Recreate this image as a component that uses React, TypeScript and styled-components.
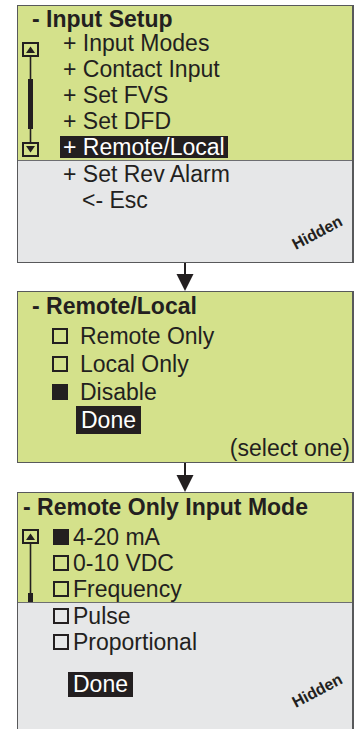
import React from 'react';
import styled, { createGlobalStyle } from 'styled-components';

const INK = '#231f20';

const GlobalStyle = createGlobalStyle`
  html, body { margin: 0; padding: 0; background: #ffffff; }
  body {
    font-family: 'Liberation Sans', Arial, Helvetica, sans-serif;
    color: ${INK};
  }
  * { box-sizing: border-box; }
`;

const Page = styled.div`
  display: flex;
  flex-direction: column;
  width: 354px;
  padding: 5px 0 0 17px;
`;

const Panel = styled.section`
  display: flex;
  flex-direction: column;
  width: 337px;
  border: 1px solid #58595b;
  border-right-width: 2px;
`;

const Green = styled.div`
  display: flex;
  flex-direction: column;
  background: #d4e18b;
`;

const Gray = styled.div<{ $h: number }>`
  position: relative;
  display: flex;
  flex-direction: column;
  height: ${(p) => p.$h}px;
  background: #e6e7e8;
  border-top: 1px solid #6d6e71;
`;

const Title = styled.div<{ $h: number; $lh: number; $pl: number }>`
  height: ${(p) => p.$h}px;
  line-height: ${(p) => p.$lh}px;
  padding-left: ${(p) => p.$pl}px;
  font-size: 23px;
  font-weight: 700;
  white-space: nowrap;
`;

const Body = styled.div`
  display: flex;
`;

const ScrollCol = styled.div<{ $w: number; $top: number }>`
  flex: 0 0 ${(p) => p.$w}px;
  padding: ${(p) => p.$top}px 0 0 4px;
  display: flex;
  align-items: flex-start;
`;

const List = styled.div`
  display: flex;
  flex-direction: column;
  flex: 1;
`;

const Row = styled.div<{ $h: number; $indent?: number; $end?: boolean }>`
  height: ${(p) => p.$h}px;
  display: flex;
  align-items: center;
  justify-content: ${(p) => (p.$end ? 'flex-end' : 'flex-start')};
  padding-left: ${(p) => p.$indent ?? 0}px;
  padding-right: ${(p) => (p.$end ? 2 : 0)}px;
  font-size: 23px;
  white-space: nowrap;
`;

const Label = styled.span<{ $selected?: boolean }>`
  padding: 0 3px;
  line-height: 22px;
  background: ${(p) => (p.$selected ? INK : 'transparent')};
  color: ${(p) => (p.$selected ? '#ffffff' : INK)};
`;

const Box = styled.span<{ $checked?: boolean; $gap: number }>`
  flex: 0 0 16px;
  width: 16px;
  height: 16px;
  margin-right: ${(p) => p.$gap}px;
  border: 2px solid ${INK};
  background: ${(p) => (p.$checked ? INK : 'transparent')};
`;

const DoneButton = styled.div<{ $h: number; $indent: number; $top?: number }>`
  align-self: flex-start;
  margin: ${(p) => p.$top ?? 0}px 0 0 ${(p) => p.$indent}px;
  padding: 0 5px;
  height: ${(p) => p.$h}px;
  line-height: ${(p) => p.$h}px;
  font-size: 23px;
  background: ${INK};
  color: #ffffff;
`;

const Hidden = styled.span<{ $top: number }>`
  position: absolute;
  left: 272px;
  top: ${(p) => p.$top}px;
  font-size: 16px;
  font-weight: 700;
  line-height: 17px;
  transform: rotate(-28deg);
  transform-origin: center;
`;

const Connector = styled.div<{ $h: number }>`
  height: ${(p) => p.$h}px;
  padding-left: 159px;
  display: flex;
`;

function ScrollGauge({ h, barTop, barBottom, down }: { h: number; barTop: number; barBottom: number; down?: boolean }) {
  return (
    <svg width={18} height={h} viewBox={`0 0 18 ${h}`}>
      <rect x={1} y={1} width={15} height={13} fill="none" stroke={INK} strokeWidth={2} />
      <polygon points="4,11 13,11 8.5,4.5" fill={INK} />
      <line x1={8.5} y1={14} x2={8.5} y2={down ? h - 14 : h} stroke={INK} strokeWidth={1.6} />
      <rect x={6} y={barTop} width={5} height={barBottom - barTop} fill={INK} />
      {down && (
        <>
          <rect x={1} y={h - 14} width={15} height={13} fill="none" stroke={INK} strokeWidth={2} />
          <polygon points={`4,${h - 11} 13,${h - 11} 8.5,${h - 4.5}`} fill={INK} />
        </>
      )}
    </svg>
  );
}

function Arrow({ h }: { h: number }) {
  return (
    <Connector $h={h}>
      <svg width={18} height={h} viewBox={`0 0 18 ${h}`}>
        <line x1={9} y1={0} x2={9} y2={h - 14} stroke={INK} strokeWidth={2} />
        <polygon points={`0.5,${h - 17} 17.5,${h - 17} 9,${h}`} fill={INK} />
      </svg>
    </Connector>
  );
}

const setupItems = ['+ Input Modes', '+ Contact Input', '+ Set FVS', '+ Set DFD'];

export default function App() {
  return (
    <>
      <GlobalStyle />
      <Page>
        <Panel>
          <Green>
            <Title $h={24} $lh={26} $pl={14}>- Input Setup</Title>
            <Body>
              <ScrollCol $w={42} $top={12}>
                <ScrollGauge h={115} barTop={37} barBottom={87} down />
              </ScrollCol>
              <List>
                {setupItems.map((t) => (
                  <Row key={t} $h={26}>
                    <Label>{t}</Label>
                  </Row>
                ))}
                <Row $h={26}>
                  <Label $selected>+ Remote/Local</Label>
                </Row>
              </List>
            </Body>
          </Green>
          <Gray $h={102}>
            <Row $h={26} $indent={42}>
              <Label>+ Set Rev Alarm</Label>
            </Row>
            <Row $h={26} $indent={61}>
              <Label>&lt;- Esc</Label>
            </Row>
            <Hidden $top={63}>Hidden</Hidden>
          </Gray>
        </Panel>

        <Arrow h={28} />

        <Panel>
          <Green>
            <Title $h={30} $lh={28} $pl={14}>- Remote/Local</Title>
            <Row $h={28} $indent={34}>
              <Box $gap={12} />
              Remote Only
            </Row>
            <Row $h={28} $indent={34}>
              <Box $gap={12} />
              Local Only
            </Row>
            <Row $h={28} $indent={34}>
              <Box $checked $gap={12} />
              Disable
            </Row>
            <Row $h={28}>
              <DoneButton $h={28} $indent={58}>Done</DoneButton>
            </Row>
            <Row $h={28} $end>(select one)</Row>
          </Green>
        </Panel>

        <Arrow h={29} />

        <Panel>
          <Green>
            <Title $h={31} $lh={28} $pl={5}>- Remote Only Input Mode</Title>
            <Body>
              <ScrollCol $w={35} $top={5}>
                <ScrollGauge h={73} barTop={64} barBottom={73} />
              </ScrollCol>
              <List>
                <Row $h={26}>
                  <Box $checked $gap={4} />
                  4-20 mA
                </Row>
                <Row $h={26}>
                  <Box $gap={4} />
                  0-10 VDC
                </Row>
                <Row $h={26}>
                  <Box $gap={4} />
                  Frequency
                </Row>
              </List>
            </Body>
          </Green>
          <Gray $h={150}>
            <Row $h={26} $indent={35}>
              <Box $gap={4} />
              Pulse
            </Row>
            <Row $h={26} $indent={35}>
              <Box $gap={4} />
              Proportional
            </Row>
            <DoneButton $h={25} $indent={50} $top={17}>Done</DoneButton>
            <Hidden $top={79}>Hidden</Hidden>
          </Gray>
        </Panel>
      </Page>
    </>
  );
}
